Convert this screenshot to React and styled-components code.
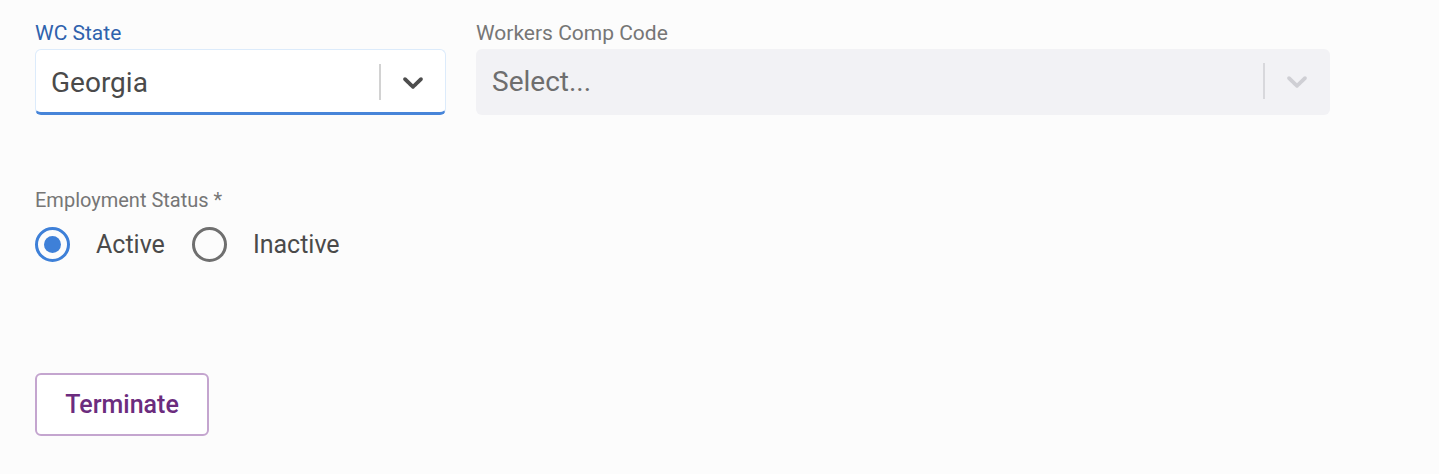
import React, { useState } from 'react'
import styled, { createGlobalStyle } from 'styled-components'

const GlobalStyle = createGlobalStyle`
  html, body {
    margin: 0;
    background: #fcfcfc;
    font-family: Roboto, "Noto Sans", sans-serif;
  }
`

const Chevron = ({ color }) => (
  <svg width="20" height="20" viewBox="0 0 20 20" fill={color}>
    <path d="M4.516 7.548c0.436-0.446 1.043-0.481 1.576 0l3.908 3.747 3.908-3.747c0.533-0.481 1.141-0.446 1.574 0 0.436 0.445 0.408 1.197 0 1.615-0.406 0.418-4.695 4.502-4.695 4.502-0.217 0.223-0.502 0.335-0.787 0.335s-0.57-0.112-0.789-0.335c0 0-4.287-4.084-4.695-4.502s-0.436-1.17 0-1.615z" />
  </svg>
)

const SelectField = ({ label, value, placeholder, width, disabled, focused }) => (
  <Field width={width}>
    <Label focused={focused}>{label}</Label>
    <SelectBox disabled={disabled} focused={focused}>
      <SelectValue muted={!value}>{value || placeholder}</SelectValue>
      <Indicators>
        <Separator disabled={disabled} />
        <IndicatorButton>
          <Chevron color={disabled ? '#cfcfd4' : '#4d4d4d'} />
        </IndicatorButton>
      </Indicators>
    </SelectBox>
  </Field>
)

const Radio = ({ label, checked, onClick }) => (
  <RadioOption onClick={onClick}>
    <RadioCircle checked={checked} />
    <RadioText>{label}</RadioText>
  </RadioOption>
)

const App = () => {
  const [status, setStatus] = useState('active')

  return (
    <>
      <GlobalStyle />
      <Page>
        <FieldRow>
          <SelectField label="WC State" value="Georgia" width={411} focused />
          <SelectField label="Workers Comp Code" placeholder="Select..." width={854} disabled />
        </FieldRow>

        <StatusGroup>
          <StatusLabel>Employment Status *</StatusLabel>
          <RadioRow>
            <Radio label="Active" checked={status === 'active'} onClick={() => setStatus('active')} />
            <Radio label="Inactive" checked={status === 'inactive'} onClick={() => setStatus('inactive')} />
          </RadioRow>
        </StatusGroup>

        <TerminateButton>Terminate</TerminateButton>
      </Page>
    </>
  )
}

const Page = styled.div`
  padding: 21px 35px 0;
  display: flex;
  flex-direction: column;
  align-items: flex-start;
`

const FieldRow = styled.div`
  display: flex;
  gap: 30px;
`

const Field = styled.div`
  width: ${({ width }) => width}px;
  display: flex;
  flex-direction: column;
`

const Label = styled.div`
  font-size: 21px;
  line-height: 24px;
  height: 24px;
  margin-bottom: 4px;
  color: ${({ focused }) => focused ? '#2f62ad' : '#767676'};
`

const SelectBox = styled.div`
  box-sizing: border-box;
  height: 66px;
  display: flex;
  align-items: center;
  border-radius: 6px;
  padding-left: 15px;
  background: ${({ disabled }) => disabled ? '#f2f2f5' : '#ffffff'};
  border: 1px solid ${({ focused }) => focused ? '#dcebfb' : 'transparent'};
  border-bottom: 3px solid ${({ focused }) => focused ? '#4785d9' : 'transparent'};
  padding-top: ${({ focused }) => focused ? '2px' : '0'};
`

const SelectValue = styled.div`
  flex: 1;
  font-size: 28px;
  color: ${({ muted }) => muted ? '#6e6e6e' : '#4a4a4a'};
`

const Indicators = styled.div`
  display: flex;
  align-items: center;
  align-self: stretch;
`

const Separator = styled.span`
  width: 2px;
  height: 36px;
  background: ${({ disabled }) => disabled ? '#d8d8dc' : '#d2d2d2'};
`

const IndicatorButton = styled.div`
  width: 64px;
  display: flex;
  align-items: center;
  justify-content: center;

  svg {
    width: 34px;
    height: 34px;
  }
`

const StatusGroup = styled.div`
  margin-top: 73px;
  display: flex;
  flex-direction: column;
`

const StatusLabel = styled.div`
  font-size: 20px;
  line-height: 24px;
  color: #767676;
`

const RadioRow = styled.div`
  display: flex;
  align-items: center;
  gap: 27px;
  margin-top: 15px;
`

const RadioOption = styled.label`
  display: flex;
  align-items: center;
  gap: 26px;
  cursor: pointer;
`

const RadioCircle = styled.span`
  box-sizing: border-box;
  width: 35px;
  height: 35px;
  border-radius: 50%;
  border: 3px solid ${({ checked }) => checked ? '#3e80d8' : '#6f6f6f'};
  display: flex;
  align-items: center;
  justify-content: center;

  &::after {
    content: '';
    width: 17px;
    height: 17px;
    border-radius: 50%;
    background: #3e80d8;
    display: ${({ checked }) => checked ? 'block' : 'none'};
  }
`

const RadioText = styled.span`
  font-size: 25px;
  color: #4a4a4a;
`

const TerminateButton = styled.button`
  margin-top: 111px;
  box-sizing: border-box;
  width: 174px;
  height: 63px;
  background: #ffffff;
  border: 2px solid #c4a5cf;
  border-radius: 6px;
  color: #6c2c7e;
  font-family: Roboto, "Noto Sans", sans-serif;
  font-size: 25px;
  font-weight: 500;
  cursor: pointer;
`

export default App
